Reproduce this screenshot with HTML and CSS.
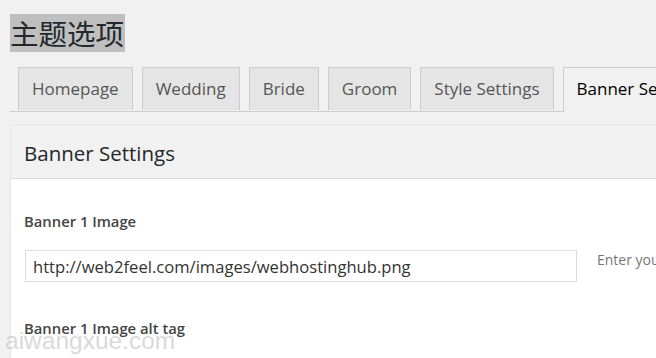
FILE: index.html
```html
<!DOCTYPE html>
<html>
<head>
<title>主题选项</title>
<link rel="stylesheet" href="styles.css">
</head>
<body>

<div class="wrap">
	<h1 class="title"><span class="sel">主题选项</span></h1>

	<div class="tabs">
		<a class="tab">Homepage</a>
		<a class="tab">Wedding</a>
		<a class="tab">Bride</a>
		<a class="tab">Groom</a>
		<a class="tab">Style Settings</a>
		<a class="tab active">Banner Settings</a>
	</div><!-- end tabs -->

	<div class="panel">
		<div class="panel-head">Banner Settings</div>
		<div class="panel-body">
			<div class="field">
				<label class="label">Banner 1 Image</label>
				<div class="field-row">
					<input type="text" class="text" value="http://web2feel.com/images/webhostinghub.png" />
					<span class="desc">Enter your banner image url</span>
				</div>
			</div>
			<div class="field">
				<label class="label">Banner 1 Image alt tag</label>
			</div>
		</div><!-- end body -->
	</div><!-- end panel -->
</div><!-- end wrap -->

<div class="mark">aiwangxue.com</div>

</body>
</html>
```

FILE: styles.css
```css
html, body {
margin: 0;
padding: 0;
overflow: hidden;
}
body {
background: #f1f1f1;
color: #444;
font-family: "Open Sans", "Noto Sans CJK SC", sans-serif;
width: 656px;
height: 358px;
position: relative;
}

.wrap {
padding: 14px 0 0 10px;
white-space: nowrap;
}

.title {
margin: 0;
font-family: "Noto Sans CJK SC", sans-serif;
font-size: 28.5px;
font-weight: 400;
line-height: 38px;
height: 38px;
color: #23282d;
}
.sel {
background: #bfbfbf;
display: inline-block;
padding: 0 1px 0 0;
}

.tabs {
margin-top: 15px;
padding-left: 8px;
border-bottom: 1px solid #ccc;
display: flex;
gap: 9px;
height: 44px;
}
.tab {
display: block;
height: 43px;
box-sizing: border-box;
border: 1px solid #ccc;
border-bottom: none;
background: #e5e5e5;
color: #555;
font-size: 17px;
line-height: 42px;
padding: 0 13px;
flex: none;
}
.tab.active {
background: #f1f1f1;
color: #000;
height: 45px;
}

.panel {
margin-top: 13px;
border: 1px solid #e5e5e5;
border-right: none;
background: #fff;
}
.panel-head {
background: #f1f1f1;
border-bottom: 1px solid #ddd;
border-top: 1px solid #fafafa;
height: 51px;
line-height: 52px;
padding-left: 13px;
font-size: 20.5px;
color: #23282d;
}
.panel-body {
padding: 32px 0 0 13px;
}
.field {
margin-bottom: 36px;
}
.label {
display: block;
font-size: 14.8px;
font-weight: 600;
color: #444;
line-height: 20px;
}
.field-row {
display: flex;
align-items: center;
margin-top: 19px;
}
.text {
width: 552px;
height: 32px;
box-sizing: border-box;
margin: 0 20px 0 1px;
border: 1px solid #ddd;
padding: 0 7px;
font-family: "Open Sans", sans-serif;
font-size: 16.6px;
color: #333;
background: #fff;
outline: none;
flex: none;
}
.desc {
font-size: 14px;
color: #777;
margin-top: -14px;
}

.mark {
position: absolute;
left: 5px;
top: 327px;
font-family: "Liberation Sans", Arial, sans-serif;
font-size: 24.5px;
color: rgba(200, 200, 200, 0.7);
}
```
